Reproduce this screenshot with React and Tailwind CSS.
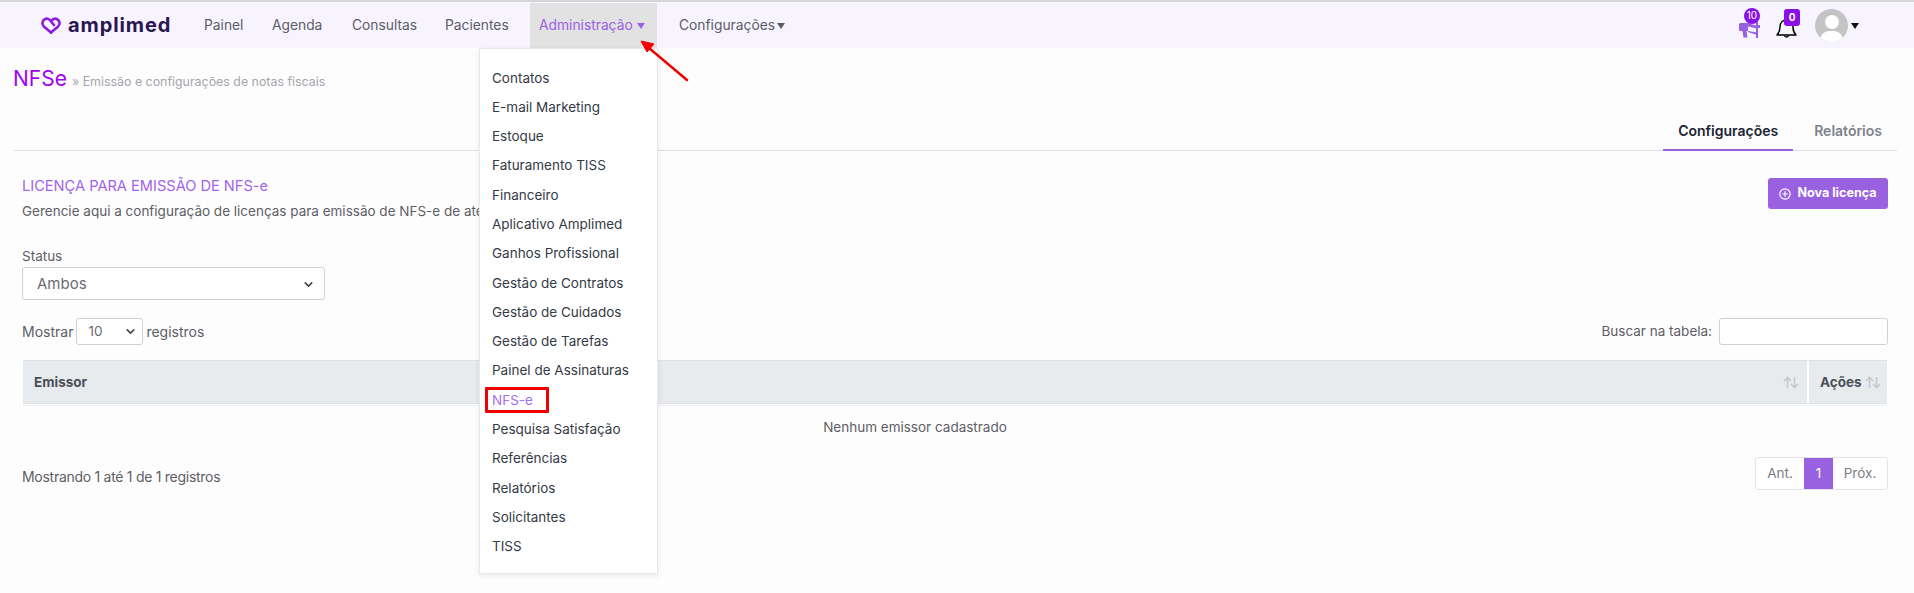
import React from 'react';
import { ChevronDown } from 'lucide-react';

const menuItems = [
  'Contatos',
  'E-mail Marketing',
  'Estoque',
  'Faturamento TISS',
  'Financeiro',
  'Aplicativo Amplimed',
  'Ganhos Profissional',
  'Gestão de Contratos',
  'Gestão de Cuidados',
  'Gestão de Tarefas',
  'Painel de Assinaturas',
  'NFS-e',
  'Pesquisa Satisfação',
  'Referências',
  'Relatórios',
  'Solicitantes',
  'TISS',
];

function Caret({ className }) {
  return <span className={`inline-block w-0 h-0 border-x-[4.5px] border-x-transparent border-t-[6px] ${className}`} />;
}

function SortIcon() {
  return (
    <svg width="16" height="13" viewBox="0 0 16 13" fill="none" stroke="#c6c9cc" strokeWidth="1.6">
      <path d="M4.5 12V1.5M1 5l3.5-3.5L8 5" />
      <path d="M11.5 1v10.5M8 8l3.5 3.5L15 8" />
    </svg>
  );
}

function Logo() {
  return (
    <div className="flex items-center">
      <svg width="20" height="17" viewBox="0 0 20 17" fill="none" stroke="#8a1ce0" strokeWidth="2.6" strokeLinejoin="round" strokeLinecap="round">
        <path d="M10 15.600 2.800 9.400C.6 7.300 1.200 3.800 3.600 2.300c2.400-1.400 5-.4 6.400 2.200l3 3.500" />
        <path d="M10 15.600l7.200-6.200c2.200-2.100 1.600-5.600-.8-7.100-2.200-1.300-4.600-.5-6.400 1.500" />
      </svg>
      <span className="ml-[7px] text-[20px] leading-none font-bold text-[#2a1650] tracking-[0.9px] pb-[2px]">amplimed</span>
    </div>
  );
}

function AdminMenu() {
  return (
    <div className="absolute top-full left-[-51px] w-[179px] h-[526px] bg-white border border-[#e8e8ec] shadow-[0_2px_6px_rgba(0,0,0,0.08)] pt-[14px] z-20 text-[13.500px]">
      {menuItems.map((item) => (
        <div key={item} className={`relative h-[29.3px] flex items-center pl-[12px] whitespace-nowrap ${item === 'NFS-e' ? 'text-[#a66ff0]' : 'text-[#343a46]'}`}>
          {item}
          {item === 'NFS-e' && <span className="absolute left-[5px] top-[2px] w-[64px] h-[26px] border-[3px] border-[#f00000] rounded-[1px]" />}
        </div>
      ))}
    </div>
  );
}

function Navbar() {
  return (
    <nav className="flex items-stretch h-[48px] bg-[#f7f4ff] border-t-2 border-[#d6d6d8] pt-[1px] pl-[41px] text-[13.800px] text-[#5c5c66]">
      <div className="flex items-center w-[163px]">
        <Logo />
      </div>
      <a className="flex items-center w-[68px]">Painel</a>
      <a className="flex items-center w-[80px]">Agenda</a>
      <a className="flex items-center w-[93px]">Consultas</a>
      <a className="flex items-center w-[85px]">Pacientes</a>
      <div className="relative flex items-center w-[127px] pl-[9px] bg-[#e2e2e2] text-[#9a5fe6]">
        Administração
        <Caret className="ml-[4px] border-t-[#9a5fe6]" />
        <AdminMenu />
      </div>
      <a className="flex items-center ml-[22px]">
        Configurações
        <Caret className="ml-[2px] border-t-[#5c5c66]" />
      </a>

      <div className="ml-auto relative flex items-center pr-[55px]">
        <div className="relative w-[21px] h-[16px] mt-[8px]">
          <svg width="21" height="16" viewBox="0 0 21 16" fill="#9960e0">
            <path d="M0 2.500C0 1.500.6 1 1.500 1H9v8H7.500l1 6.500H4.500L3.500 9H1.500C.6 9 0 8.500 0 7.500z" />
            <path d="M9 1l9 3v2.500L9 4.500zM9 9l9 1.500V13L9 10z" />
            <path d="M17 0h2v3h2v3h-2v10h-2z" />
          </svg>
          <span className="absolute left-[5px] top-[-14px] w-[16px] h-[16px] rounded-full bg-[#8a10e6] text-white text-[10px] flex items-center justify-center">10</span>
        </div>
        <div className="relative ml-[16px] w-[21px] h-[22px] mt-[4px]">
          <svg width="21" height="22" viewBox="0 0 21 22" fill="none" stroke="#000" strokeWidth="1.500" strokeLinejoin="round">
            <path d="M1 18c2-2 3-3.500 3-8 0-4 2.500-7 6.500-7s6.500 3 6.500 7c0 4.500 1 6 3 8z" />
            <path d="M8.500 18.500c.3 2 3.700 2 4 0" />
          </svg>
          <span className="absolute left-[8px] top-[-8px] w-[16px] h-[17px] rounded-[3px] bg-[#8a10e6] text-white text-[10px] font-bold flex items-center justify-center">0</span>
        </div>
        <div className="relative ml-[18px] w-[33px] h-[33px] rounded-full bg-[#c4c4c4] overflow-hidden">
          <span className="absolute left-[10px] top-[6px] w-[14px] h-[14px] rounded-full bg-white" />
          <span className="absolute left-[5px] top-[22px] w-[23px] h-[18px] rounded-full bg-white" />
        </div>
        <Caret className="ml-[3px] border-t-[#111]" />
      </div>
    </nav>
  );
}

function App() {
  return (
    <div className="relative h-[593px] overflow-hidden bg-[#fdfdfd] text-[#5d5d66] text-[13.500px] font-['Inter',sans-serif]">
      <Navbar />

      <div className="flex items-baseline pl-[13px] pt-[18px]">
        <h1 className="text-[21px] leading-[26px] text-[#a100f2]">NFSe</h1>
        <span className="ml-[5px] text-[12.400px] text-[#a5a5ad]">» Emissão e configurações de notas fiscais</span>
      </div>

      <div className="flex justify-end h-[48px] ml-[14px] mr-[17px] mt-[11px] border-b border-[#dedee4] pr-[15px]">
        <div className="w-[130px] h-[48px] flex items-center justify-center pt-[8px] border-b-2 border-[#9960e0] font-semibold text-[14px] text-[#1c2333]">Configurações</div>
        <div className="ml-[21px] flex items-center pt-[8px] font-semibold text-[14px] text-[#7d838c] h-[47px]">Relatórios</div>
      </div>

      <div className="px-[22px] pr-[26px]">
        <div className="flex justify-between mt-[27px]">
          <div>
            <h2 className="text-[14.600px] leading-[18px] mt-[-1px] text-[#a263ea]">LICENÇA PARA EMISSÃO DE NFS-e</h2>
            <p className="mt-[7px] leading-[18px]">Gerencie aqui a configuração de licenças para emissão de NFS-e de ate</p>
          </div>
          <button className="flex items-center justify-center w-[120px] h-[31px] rounded-[3px] bg-[#9960e0] text-white text-[12.600px] font-bold">
            <svg width="12" height="12" viewBox="0 0 12 12" fill="none" stroke="#fff" strokeWidth="1.200" className="mr-[6px]">
              <circle cx="6" cy="6" r="5.200" />
              <path d="M6 3.300v5.400M3.300 6h5.400" />
            </svg>
            Nova licença
          </button>
        </div>

        <label className="block mt-[27px] leading-[18px]">Status</label>
        <div className="mt-[2px] flex items-center justify-between w-[303px] h-[33px] pt-[1px] pl-[14px] pr-[9px] bg-white border border-[#cfd0d4] rounded-[3px] text-[15px] text-[#6b6b72]">
          Ambos
          <ChevronDown size={13} strokeWidth={3} className="text-[#44444a]" />
        </div>

        <div className="flex items-center justify-between mt-[18px] h-[27px]">
          <div className="flex items-center">
            <span className="text-[14px]">Mostrar</span>
            <div className="ml-[3px] flex items-center justify-between w-[67px] h-[27px] pl-[11px] pr-[5px] bg-white border border-[#cfd0d4] rounded-[3px] text-[#6b6b72]">
              10
              <ChevronDown size={13} strokeWidth={3} className="text-[#44444a]" />
            </div>
            <span className="ml-[3px] text-[14px]">registros</span>
          </div>
          <div className="flex items-center">
            Buscar na tabela:
            <div className="ml-[7px] w-[169px] h-[27px] bg-white border border-[#cfd0d4] rounded-[3px]" />
          </div>
        </div>

        <div className="flex h-[44px] mt-[15px] ml-[1px] mr-[1px] bg-[#e8ebee] border-y border-[#e0e2e5] font-bold text-[#4b4f57]">
          <div className="flex-1 flex items-center justify-between pl-[11px] pr-[8px]">
            Emissor
            <SortIcon />
          </div>
          <div className="w-[80px] flex items-center pl-[11px] border-l-2 border-white">
            Ações
            <span className="ml-[3px]"><SortIcon /></span>
          </div>
        </div>
        <div className="mt-[1px] mx-[1px] h-px bg-[#eeeef0]" />

        <div className="h-[43px] mr-[80px] flex items-center justify-center text-[13.500px]">Nenhum emissor cadastrado</div>

        <div className="flex items-center justify-between mt-[8px] h-[33px]">
          <span className="pt-[6px] text-[14px] tracking-[-0.28px]">Mostrando 1 até 1 de 1 registros</span>
          <div className="flex h-[33px] bg-white border border-[#e4e4e8] rounded-[3px] text-[#7a7d85]">
            <span className="w-[48px] flex items-center justify-center">Ant.</span>
            <span className="w-[29px] flex items-center justify-center bg-[#9960e0] text-white">1</span>
            <span className="w-[54px] flex items-center justify-center">Próx.</span>
          </div>
        </div>
      </div>

      {/* seta vermelha apontando pro menu */}
      <svg width="60" height="50" viewBox="0 0 60 50" className="absolute left-[635px] top-[36px] z-30" fill="#f00000" stroke="#f00000">
        <path d="M52 44 8 7" strokeWidth="2.500" strokeLinecap="round" />
        <path d="M6 5l13 3-7 8z" />
      </svg>
    </div>
  );
}

export default App;
